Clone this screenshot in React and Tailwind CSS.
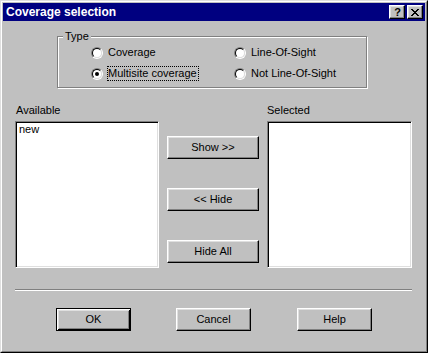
import React from 'react';

const raised =
  'flex items-center justify-center bg-[#c0c0c0] border border-t-white border-l-white border-r-black border-b-black shadow-[inset_-1px_-1px_0_#808080,inset_1px_1px_0_#dfdfdf]';

const sunken =
  'bg-white border border-t-[#808080] border-l-[#808080] border-r-white border-b-white shadow-[inset_1px_1px_0_#000,inset_-1px_-1px_0_#dfdfdf]';

function Radio({ checked }) {
  return (
    <span className="flex w-[12px] h-[12px] shrink-0 rounded-full border border-t-[#808080] border-l-[#808080] border-r-white border-b-white">
      <span className="flex w-full h-full items-center justify-center rounded-full bg-white border border-t-black border-l-black border-r-[#dfdfdf] border-b-[#dfdfdf]">
        {checked && <span className="w-[4px] h-[4px] rounded-full bg-black" />}
      </span>
    </span>
  );
}

function Option({ label, checked, focused }) {
  return (
    <div className="flex items-center h-[21px]">
      <Radio checked={checked} />
      <span
        className={
          focused
            ? 'ml-[4px] pr-[1px] leading-[13px] border border-dotted border-black'
            : 'ml-[4px] pr-[1px] leading-[13px] border border-transparent'
        }
      >
        {label}
      </span>
    </div>
  );
}

function CloseGlyph() {
  const rows = [
    [[0, 2], [6, 2]],
    [[1, 2], [5, 2]],
    [[2, 4]],
    [[3, 2]],
    [[2, 4]],
    [[1, 2], [5, 2]],
    [[0, 2], [6, 2]],
  ];
  return (
    <svg width="8" height="7" viewBox="0 0 8 7" shapeRendering="crispEdges">
      {rows.map((segs, y) =>
        segs.map(([x, w], i) => <rect key={`${y}-${i}`} x={x} y={y} width={w} height="1" fill="#000" />)
      )}
    </svg>
  );
}

export default function App() {
  return (
    <div className="w-[428px] h-[353px] bg-[#c0c0c0] border border-t-[#dfdfdf] border-l-[#dfdfdf] border-r-black border-b-black font-['Liberation_Sans',Arial,sans-serif] text-[11px] text-black">
      <div className="h-full border border-t-white border-l-white border-r-[#808080] border-b-[#808080] p-[1px]">
        {/* title bar */}
        <div className="flex items-center h-[18px] bg-[#000080] pl-[3px] pr-[2px]">
          <span className="flex-1 text-white font-bold text-[12px] leading-[14px]">Coverage selection</span>
          <div className={`${raised} w-[16px] h-[14px]`}>
            <span className="font-bold text-[11px] leading-[10px] pl-[1px]">?</span>
          </div>
          <div className={`${raised} w-[16px] h-[14px] ml-[2px]`}>
            <CloseGlyph />
          </div>
        </div>

        {/* Type group */}
        <div className="relative ml-[54px] mt-[15px] w-[310px] h-[52px] border border-[#808080] shadow-[inset_1px_1px_0_#fff,1px_1px_0_#fff]">
          <span className="absolute left-[5px] top-[-7px] px-[2px] bg-[#c0c0c0] leading-[13px]">Type</span>
          <div className="grid grid-cols-[143px_auto] pl-[33px] pt-[5px]">
            <Option label="Coverage" />
            <Option label="Line-Of-Sight" />
            <Option label="Multisite coverage" checked focused />
            <Option label="Not Line-Of-Sight" />
          </div>
        </div>

        {/* lists */}
        <div className="flex ml-[12px] mt-[16px]">
          <div className="flex flex-col w-[144px]">
            <span className="leading-[13px] pl-[1px]">Available</span>
            <div className={`${sunken} mt-[4px] h-[147px] pt-[1px] pl-[3px]`}>
              <div className="leading-[13px]">new</div>
            </div>
          </div>
          <div className="flex flex-col ml-[8px] w-[92px] pt-[32px] gap-[29px]">
            <button className={`${raised} h-[23px]`}>Show &gt;&gt;</button>
            <button className={`${raised} h-[23px]`}>&lt;&lt; Hide</button>
            <button className={`${raised} h-[23px]`}>Hide All</button>
          </div>
          <div className="flex flex-col ml-[8px] w-[145px]">
            <span className="leading-[13px]">Selected</span>
            <div className={`${sunken} mt-[4px] h-[147px]`} />
          </div>
        </div>

        {/* separator */}
        <div className="ml-[12px] mt-[21px] w-[397px] h-[2px] border-t border-t-[#808080] border-b border-b-white" />

        {/* dialog buttons */}
        <div className="flex mt-[17px]">
          <button className="ml-[53px] w-[75px] h-[23px] flex items-center justify-center bg-[#c0c0c0] border border-black shadow-[inset_1px_1px_0_#fff,inset_-1px_-1px_0_#000,inset_2px_2px_0_#dfdfdf,inset_-2px_-2px_0_#808080]">
            OK
          </button>
          <button className={`${raised} ml-[45px] w-[75px] h-[23px]`}>Cancel</button>
          <button className={`${raised} ml-[46px] w-[75px] h-[23px]`}>Help</button>
        </div>
      </div>
    </div>
  );
}
